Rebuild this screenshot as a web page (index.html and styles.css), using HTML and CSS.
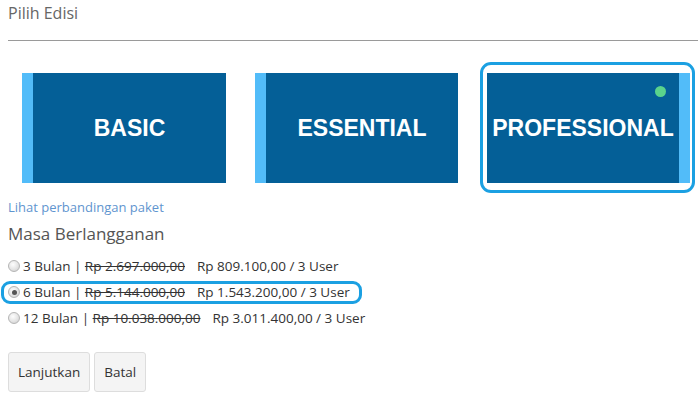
FILE: index.html
```html
<!DOCTYPE html>
<html>
<head>
<meta charset="utf-8">
<link rel="stylesheet" href="styles.css">
</head>
<body>
<div class="page">
  <h2 class="title">Pilih Edisi</h2>
  <div class="cards">
    <div class="card stripe-left"><span>BASIC</span></div>
    <div class="card stripe-left"><span>ESSENTIAL</span></div>
    <div class="card stripe-right selected">
      <span>PROFESSIONAL</span>
      <i class="dot"></i>
      <i class="mark"></i>
    </div>
  </div>
  <a class="link" href="#">Lihat perbandingan paket</a>
  <h3 class="sub">Masa Berlangganan</h3>
  <div class="options">
    <label class="opt"><input type="radio" name="p"><span>3 Bulan | <s>Rp 2.697.000,00</s><span class="price">Rp 809.100,00 / 3 User</span></span></label>
    <label class="opt chosen"><input type="radio" name="p" checked><span>6 Bulan | <s>Rp 5.144.000,00</s><span class="price">Rp 1.543.200,00 / 3 User</span></span><i class="ring"></i></label>
    <label class="opt"><input type="radio" name="p"><span>12 Bulan | <s>Rp 10.038.000,00</s><span class="price">Rp 3.011.400,00 / 3 User</span></span></label>
  </div>
  <div class="actions">
    <button class="btn">Lanjutkan</button>
    <button class="btn">Batal</button>
  </div>
</div>
</body>
</html>
```
FILE: styles.css
```css
* { box-sizing: border-box; }
html, body { margin: 0; padding: 0; background: #fff; }
body { font-family: "Open Sans", "Noto Sans", sans-serif; color: #333; }
.page { width: 698px; height: 400px; overflow: hidden; }
.title {
  margin: 0 0 0 8px;
  padding-top: 2px;
  height: 41px;
  font-size: 16px;
  line-height: 22px;
  font-weight: 400;
  color: #666;
  border-bottom: 1px solid #9a9a9a;
}
.cards {
  display: flex;
  gap: 29px;
  padding: 32px 0 0 22px;
  height: 142px;
}
.card {
  position: relative;
  width: 204px;
  height: 110px;
  background: #045f97;
  display: flex;
  align-items: center;
  justify-content: center;
  color: #fff;
  font-family: "Liberation Sans", Arial, sans-serif;
  font-weight: 700;
  font-size: 23px;
}
.card:nth-child(2), .card:nth-child(3) { width: 203px; }
.stripe-left { border-left: 11px solid #52bcf9; }
.stripe-right { border-right: 11px solid #52bcf9; }
.dot {
  position: absolute;
  top: 13px;
  right: 13px;
  width: 11px;
  height: 11px;
  border-radius: 50%;
  background: #5ad38c;
}
.mark {
  position: absolute;
  top: -11px;
  left: -7px;
  right: -16px;
  bottom: -10px;
  border: 3px solid #1ba0e2;
  border-radius: 11px;
}
.link {
  display: block;
  margin: 14px 0 0 8px;
  font-size: 13px;
  line-height: 20px;
  color: #5f95cf;
  text-decoration: none;
}
.sub {
  margin: 5px 0 0 8px;
  font-size: 17px;
  line-height: 24px;
  font-weight: 400;
  color: #555;
}
.options { margin: 7px 0 0 8px; }
.opt {
  position: relative;
  display: flex;
  align-items: center;
  height: 26px;
  font-size: 13.5px;
  color: #333;
}
.opt input {
  -webkit-appearance: none;
  appearance: none;
  margin: 0 3px 0 0;
  width: 12px;
  height: 12px;
  border-radius: 50%;
  border: 1px solid #b5b5b5;
  background: radial-gradient(circle at 40% 35%, #fdfdfd 0%, #e4e4e4 55%, #c9c9c9 100%);
  position: relative;
}
.opt input:checked::after {
  content: "";
  position: absolute;
  left: 2.5px;
  top: 2.5px;
  width: 5px;
  height: 5px;
  border-radius: 50%;
  background: #555;
}
.opt s { color: #333; }
.price { margin-left: 12px; }
.ring {
  position: absolute;
  left: -7px;
  top: 2px;
  width: 361px;
  height: 23px;
  border: 3px solid #1ba0e2;
  border-radius: 9px;
}
.actions {
  display: flex;
  gap: 4px;
  margin: 21px 0 0 8px;
}
.btn {
  height: 40px;
  padding: 0 9px;
  background: #f4f4f4;
  border: 1px solid #ddd;
  border-radius: 3px;
  font-family: "Open Sans", "Noto Sans", sans-serif;
  font-size: 13.5px;
  color: #333;
}
```
